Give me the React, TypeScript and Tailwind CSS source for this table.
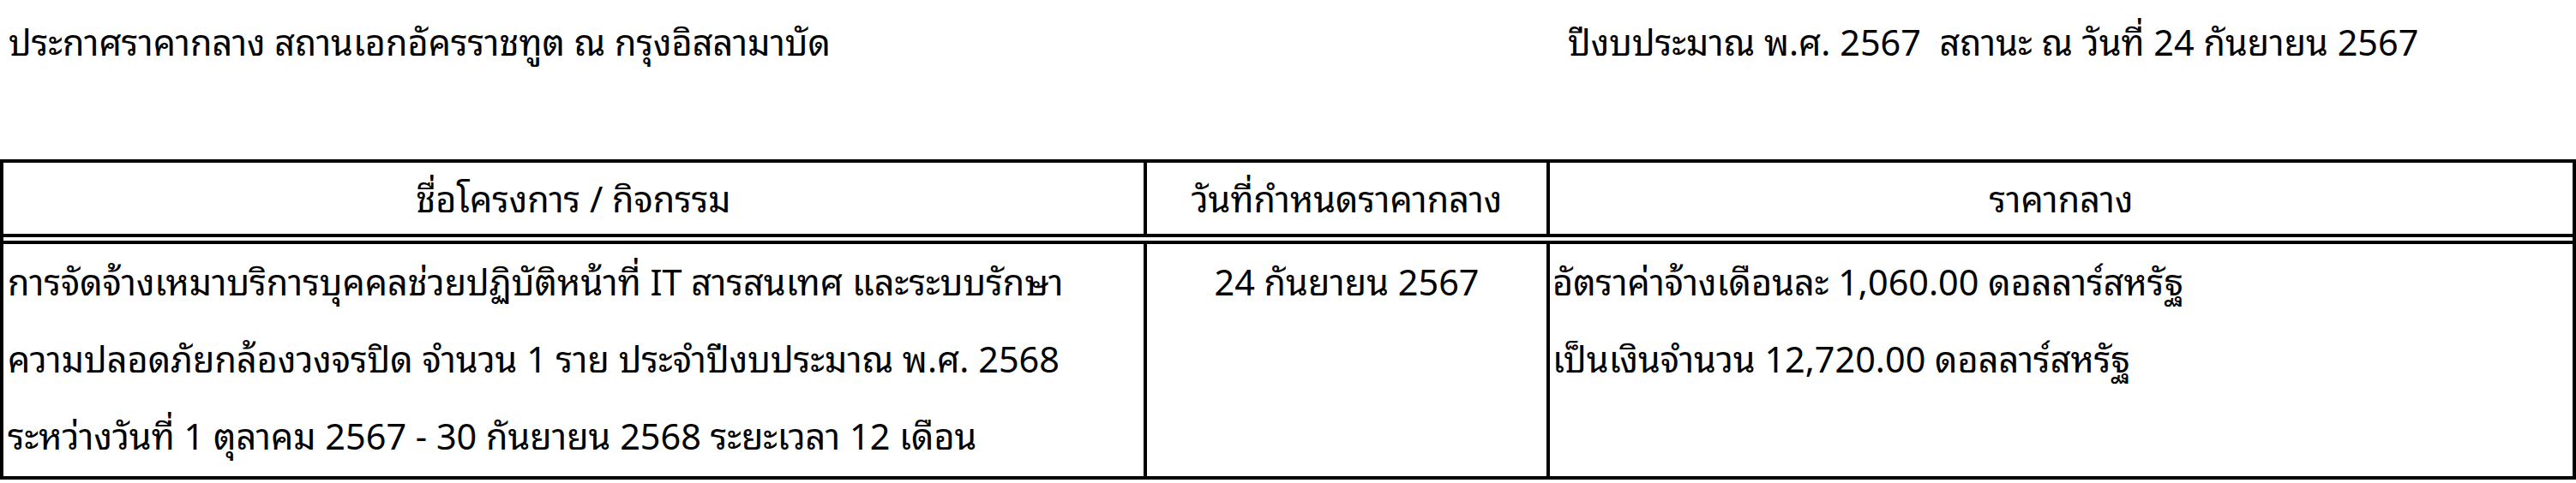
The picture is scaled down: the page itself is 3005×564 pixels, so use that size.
import React from "react";

const font = {
  fontFamily:
    '"Noto Sans Thai Looped", Loma, Garuda, Tahoma, "Noto Sans Thai", "Noto Sans", "DejaVu Sans", sans-serif',
};

export default function App() {
  return (
    <div
      className="relative w-[3005px] h-[564px] overflow-hidden bg-white text-black text-[41.4px] leading-none"
      style={font}
    >
      {/* Title line */}
      <div className="flex h-[186px] items-start pt-[26px]">
        <div className="pl-[10px] w-[1829px] whitespace-pre">
          ประกาศราคากลาง สถานเอกอัครราชทูต ณ กรุงอิสลามาบัด
        </div>
        <div className="whitespace-pre">
          {"ปีงบประมาณ พ.ศ. 2567  สถานะ ณ วันที่ 24 กันยายน 2567"}
        </div>
      </div>

      {/* Table */}
      <div className="border-x-[4px] border-t-[4px] border-b-[4px] border-black">
        {/* Header row */}
        <div className="flex h-[87px] border-b-[4px] border-black">
          <div className="w-[1334px] border-r-[4px] border-black flex items-center justify-center pb-[4px]">
            ชื่อโครงการ / กิจกรรม
          </div>
          <div className="w-[470px] border-r-[4px] border-black flex items-center justify-center pb-[4px]">
            วันที่กำหนดราคากลาง
          </div>
          <div className="flex-1 flex items-center justify-center pb-[4px]">ราคากลาง</div>
        </div>
        {/* gap of double line */}
        <div className="h-[4px] bg-white" />
        {/* Body row */}
        <div className="flex h-[275px] border-t-[4px] border-black">
          <div className="w-[1334px] border-r-[4px] border-black pl-[5px] leading-[90px] whitespace-pre">
            <div className="-mt-[4px]">
              <div>การจัดจ้างเหมาบริการบุคคลช่วยปฏิบัติหน้าที่ IT สารสนเทศ และระบบรักษา</div>
              <div>ความปลอดภัยกล้องวงจรปิด จำนวน 1 ราย ประจำปีงบประมาณ พ.ศ. 2568</div>
              <div>ระหว่างวันที่ 1 ตุลาคม 2567 - 30 กันยายน 2568 ระยะเวลา 12 เดือน</div>
            </div>
          </div>
          <div className="w-[470px] border-r-[4px] border-black leading-[90px] text-center">
            <div className="-mt-[4px]">24 กันยายน 2567</div>
          </div>
          <div className="flex-1 pl-[3px] leading-[90px] whitespace-pre">
            <div className="-mt-[4px]">
              <div>อัตราค่าจ้างเดือนละ 1,060.00 ดอลลาร์สหรัฐ</div>
              <div>เป็นเงินจำนวน 12,720.00 ดอลลาร์สหรัฐ</div>
            </div>
          </div>
        </div>
      </div>
    </div>
  );
}
